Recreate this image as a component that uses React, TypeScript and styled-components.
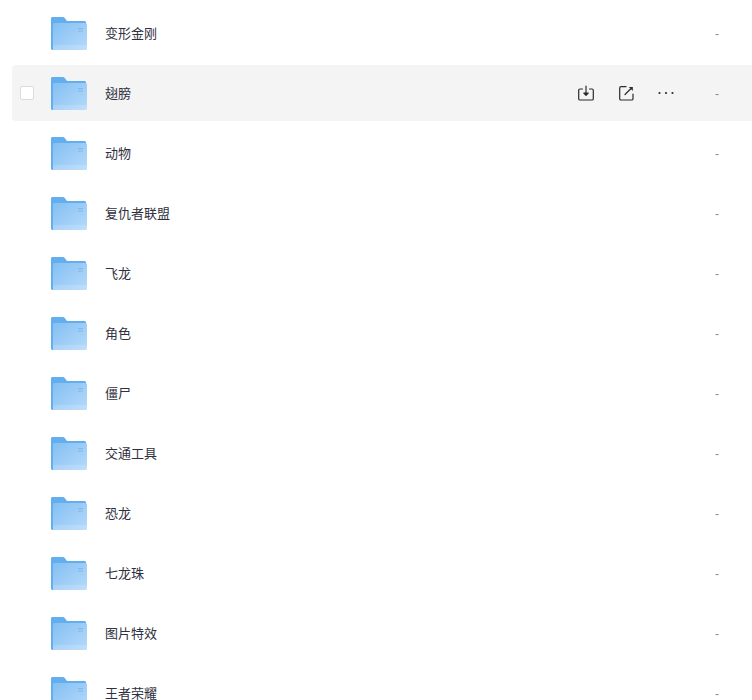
import React from 'react';
import styled, { createGlobalStyle } from 'styled-components';

const FOLDERS = [
  '变形金刚',
  '翅膀',
  '动物',
  '复仇者联盟',
  '飞龙',
  '角色',
  '僵尸',
  '交通工具',
  '恐龙',
  '七龙珠',
  '图片特效',
  '王者荣耀',
];

const HOVERED = '翅膀';

const FolderIcon = ({ id }: { id: number }) => (
  <FolderSvg viewBox="0 0 36 33">
    <defs>
      <linearGradient id={`front-${id}`} x1="0" y1="0" x2="1" y2="1">
        <stop offset="0" stopColor="#84bff2" />
        <stop offset="1" stopColor="#b6dafb" />
      </linearGradient>
    </defs>
    <path
      d="M0 1.5C0 .7.7 0 1.5 0h10.6c.5 0 .9.2 1.2.6L16 4h17.5c.8 0 1.5.7 1.5 1.5V10H3v23H1.5C.7 33 0 32.3 0 31.5z"
      fill="#62aeef"
    />
    <path
      d="M2 7.5C2 6.7 2.7 6 3.5 6h31c.8 0 1.500.7 1.500 1.500v24c0 .8-.7 1.500-1.500 1.500H2z"
      fill={`url(#front-${id})`}
    />
    <path d="M2 28h34v3.500c0 .8-.7 1.500-1.500 1.500H2z" fill="#fff" opacity=".14" />
    <path d="M27 11h5v1h-5zM27 13.500h5v1h-5z" fill="#7fb6e8" />
  </FolderSvg>
);

const DownloadIcon = () => (
  <ActionSvg viewBox="0 0 16 16" width="16" height="16">
    <path d="M4.500 4H2C1.200 4 .7 4.500.7 5.300v8.400c0 .8.500 1.300 1.300 1.300h12c.8 0 1.300-.5 1.300-1.300V5.300c0-.8-.5-1.300-1.300-1.300h-2.500" />
    <path d="M8 1v8.500" />
    <path d="M5.800 8 8 10.300 10.200 8z" fill="#2a2b30" />
  </ActionSvg>
);

const ShareIcon = () => (
  <ActionSvg viewBox="0 0 16 16" width="16" height="16">
    <path d="M8 1.700H3C2.200 1.700 1.700 2.200 1.700 3v10.700c0 .8.500 1.300 1.300 1.300h10.700c.8 0 1.300-.5 1.300-1.300V9" />
    <path d="M7 9.500l5.500-5.500" />
    <path d="M10.800 2h4v4z" fill="#2a2b30" stroke="none" />
  </ActionSvg>
);

const MoreIcon = () => (
  <MoreSvg viewBox="0 0 16 4" width="16" height="4">
    <circle cx="1.500" cy="2" r="1.100" />
    <circle cx="8" cy="2" r="1.100" />
    <circle cx="14.500" cy="2" r="1.100" />
  </MoreSvg>
);

const App = () => (
  <>
    <GlobalStyle />
    <Page>
      <List>
        {FOLDERS.map((name, index) => {
          const hovered = name === HOVERED;
          return (
            <Row key={name} $hovered={hovered}>
              <Checkbox $visible={hovered} />
              <FolderIcon id={index} />
              <Name>{name}</Name>
              {hovered && (
                <Actions>
                  <DownloadIcon />
                  <ShareIcon />
                  <MoreIcon />
                </Actions>
              )}
              <Size>-</Size>
            </Row>
          );
        })}
      </List>
    </Page>
  </>
);

const GlobalStyle = createGlobalStyle`
  html, body {
    margin: 0;
    padding: 0;
    height: 700px;
    overflow: hidden;
    background: #fff;
    font-family: "Liberation Sans", "Noto Sans CJK SC", sans-serif;
  }
`;

const Page = styled.div`
  height: 700px;
  overflow: hidden;
  padding-left: 12px;
`;

const List = styled.div`
  display: flex;
  flex-direction: column;
  gap: 4px;
  padding-top: 5px;
`;

const Row = styled.div<{ $hovered: boolean }>`
  flex: none;
  height: 56px;
  display: flex;
  align-items: center;
  padding-left: 8px;
  border-radius: 4px 0 0 4px;
  background: ${(p) => (p.$hovered ? '#f4f4f4' : 'transparent')};
`;

const Checkbox = styled.span<{ $visible: boolean }>`
  flex: none;
  box-sizing: border-box;
  width: 14px;
  height: 14px;
  border: 1px solid #dcdcdc;
  border-radius: 2px;
  background: #fff;
  visibility: ${(p) => (p.$visible ? 'visible' : 'hidden')};
`;

const FolderSvg = styled.svg`
  flex: none;
  width: 36px;
  height: 33px;
  margin-left: 17px;
`;

const Name = styled.span`
  flex: 1;
  margin-left: 18px;
  padding-top: 1px;
  font-size: 13px;
  line-height: 20px;
  color: #2f3040;
`;

const Actions = styled.div`
  display: flex;
  align-items: center;
  gap: 24px;
`;

const ActionSvg = styled.svg`
  display: block;
  fill: none;
  stroke: #2a2b30;
  stroke-width: 1.2;
  stroke-linecap: round;
  stroke-linejoin: round;
`;

const MoreSvg = styled.svg`
  display: block;
  fill: #2a2b30;
`;

const Size = styled.span`
  flex: none;
  width: 37px;
  margin-left: 41px;
  padding-top: 2px;
  font-size: 12px;
  line-height: 20px;
  color: #8a8b90;
`;

export default App;
